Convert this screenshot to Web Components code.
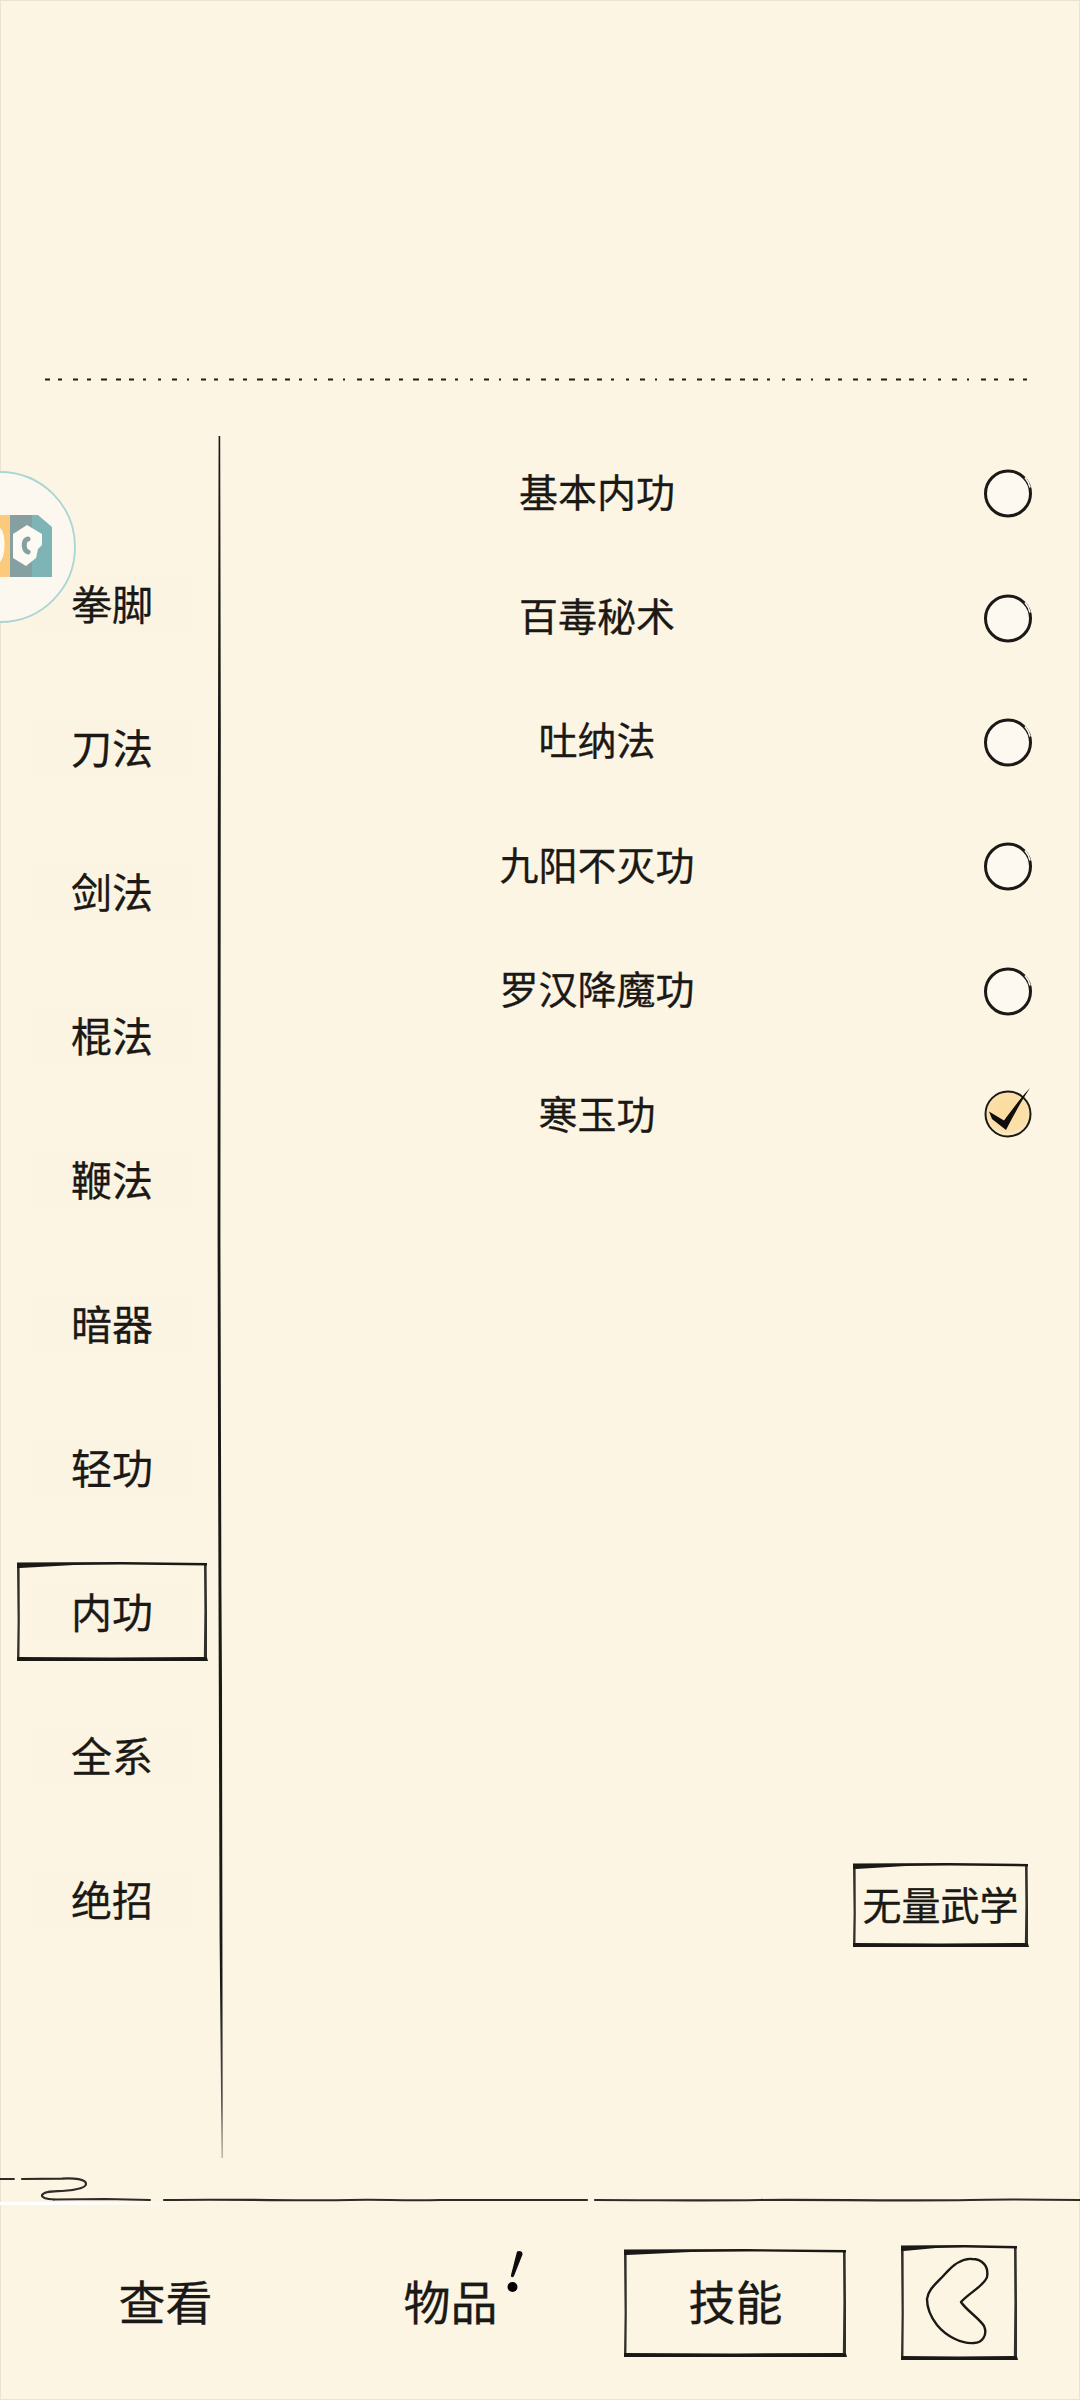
<!DOCTYPE html>
<html lang="zh">
<head>
<meta charset="utf-8">
<title>技能</title>
<style>
html, body { margin: 0; padding: 0; background: #fcf5e4; }
body { font-family: "Noto Sans CJK SC", "Noto Sans", sans-serif; color: #1b1916; -webkit-text-stroke: .3px #1b1916; }
</style>
</head>
<body>
<wuxia-page>
  <wuxia-float slot="float"></wuxia-float>

  <wuxia-side slot="side">
    <side-item>拳脚</side-item>
    <side-item>刀法</side-item>
    <side-item>剑法</side-item>
    <side-item>棍法</side-item>
    <side-item>鞭法</side-item>
    <side-item>暗器</side-item>
    <side-item>轻功</side-item>
    <side-item active>内功</side-item>
    <side-item>全系</side-item>
    <side-item>绝招</side-item>
  </wuxia-side>

  <wuxia-list slot="list">
    <skill-row>基本内功</skill-row>
    <skill-row>百毒秘术</skill-row>
    <skill-row>吐纳法</skill-row>
    <skill-row>九阳不灭功</skill-row>
    <skill-row>罗汉降魔功</skill-row>
    <skill-row checked>寒玉功</skill-row>
    <sketch-box slot="action" w="175" h="84" size="39">无量武学</sketch-box>
  </wuxia-list>

  <wuxia-footer slot="footer">
    <bar-tab>查看</bar-tab>
    <bar-tab notice>物品</bar-tab>
    <bar-tab active>技能</bar-tab>
    <back-button></back-button>
  </wuxia-footer>
</wuxia-page>

<script>
const INK = '#1b1916';

// hand drawn rectangle, thick wedge on the top left like the reference
function framePaths (w, h) {
    return `
      <path fill="${INK}" d="M0 0.5 L${w * 0.55} 0 L${w} 1 L${w} 3.4 L${w * 0.55} 2.4 L${w * 0.3} 3 L3 6 L0 6 Z"/>
      <path fill="${INK}" d="M0 3 L2.6 3 L2.8 ${h * 0.6} L2.4 ${h} L0 ${h} L0.6 ${h * 0.6} Z" opacity=".9"/>
      <path fill="${INK}" d="M${w - 3} 2 L${w - 0.4} 2 L${w} ${h * 0.5} L${w} ${h} L${w - 3.2} ${h} L${w - 2.6} ${h * 0.5} Z" opacity=".9"/>
      <path fill="${INK}" d="M0 ${h - 4} L${w * 0.5} ${h - 3.6} L${w - 4} ${h - 4} L${w} ${h - 3.4} L${w + 1} ${h} L${w * 0.5} ${h} L0 ${h} Z"/>`;
}

function frameSvg (w, h) {
    return `<svg class="frame" width="${w + 2}" height="${h}" viewBox="0 0 ${w + 2} ${h}" aria-hidden="true">${framePaths(w, h)}</svg>`;
}

class WuxiaPage extends HTMLElement {
    constructor () {
        super();
        this.attachShadow({ mode: 'open' });
        this.shadowRoot.innerHTML = `
<style>
:host {
    display: grid;
    grid-template-rows: 381px 1789px 35px 195px;
    position: relative;
    width: 1080px;
    height: 2400px;
    overflow: hidden;
    background: #fcf5e4;
    box-shadow: inset 0 0 0 1px #e9e3d2;
}
.top { display: flex; align-items: flex-end; padding: 0 45px; }
.top svg { display: block; }
.main { display: flex; min-height: 0; }
.rule svg { display: block; }
</style>
<div class="top">
  <svg width="990" height="3" viewBox="0 0 990 3" aria-hidden="true">
    <line x1="0" y1="1.500" x2="990" y2="1.500" stroke="#1f1d19" stroke-width="2.200" stroke-dasharray="5 8 4 11 5 9 4 10 6 9 5 8 5 9 3 12 3 11 5 10 2 12"/>
  </svg>
</div>
<div class="main">
  <slot name="side"></slot>
  <svg width="10" height="1722" viewBox="0 0 10 1722" style="margin:55px 0 0 8px;flex:none" aria-hidden="true">
    <defs><linearGradient id="tail" x1="0" y1="0" x2="0" y2="1"><stop offset="0" stop-color="${INK}"/><stop offset=".9" stop-color="${INK}"/><stop offset=".97" stop-color="#55524a"/><stop offset="1" stop-color="#aaa69a"/></linearGradient></defs>
    <path fill="url(#tail)" d="M3.600 0 L5.200 0 L5.800 300 L5.400 800 L6.400 1150 L7 1250 L7.400 1500 L7.800 1722 L6.600 1722 L4.600 1500 L3.800 1250 L3 1000 L2.600 800 L2.800 400 Z"/>
  </svg>
  <slot name="list"></slot>
</div>
<div class="rule">
  <svg width="1080" height="35" viewBox="0 2170 1080 35" aria-hidden="true">
    <defs><linearGradient id="fade"><stop offset="0" stop-color="#fff"/><stop offset=".3" stop-color="#fff"/><stop offset="1" stop-color="#fff" stop-opacity="0"/></linearGradient></defs>
    <rect x="0" y="2202" width="190" height="3" fill="url(#fade)"/>
    <g fill="none" stroke="#2e2b25" stroke-linecap="round">
      <path stroke-width="1.800" d="M0 2179 H14"/>
      <path stroke-width="2.200" d="M22 2179 L62 2178.600 C74 2178 86 2179 86 2184 C86 2188 76 2190 62 2191 C54 2191.500 44 2191 42 2195 C41.500 2198 47 2199 54 2199.500"/>
      <path stroke-width="2" d="M54 2199.500 L105 2199 L150 2200"/>
      <path stroke-width="2.200" d="M164 2200 C240 2199 300 2201 350 2200 C380 2199 400 2201 440 2200 C500 2200 550 2200 587 2200"/>
      <path stroke-width="2.200" d="M595 2200 C660 2200 700 2201 760 2200 C820 2199.500 900 2201 970 2200 C1000 2199 1040 2199.500 1080 2200"/>
    </g>
  </svg>
</div>
<slot name="footer"></slot>
<slot name="float"></slot>`;
    }
}

class WuxiaFloat extends HTMLElement {
    constructor () {
        super();
        this.attachShadow({ mode: 'open' });
        this.shadowRoot.innerHTML = `
<style>
:host { display: block; position: absolute; left: 0; top: 470px; width: 78px; height: 154px; }
svg { display: block; }
</style>
<svg width="78" height="154" viewBox="0 470 78 154" aria-hidden="true">
  <circle cx="0" cy="547" r="75" fill="#fcf8f0" stroke="#a9d5d2" stroke-width="1.800"/>
  <rect x="0" y="515" width="10" height="62" fill="#fbca7c"/>
  <path fill="#86a0a1" d="M10 515 H32 V577 H10 Z"/>
  <path fill="#7fb4b7" d="M32 515 H38 L52 527 V577 H32 Z"/>
  <path fill="#fdfaf3" d="M27 525 L42 534 V545 L38 549 L36 558 L26 566 L13 558 V534 Z"/>
  <path fill="none" stroke="#86a0a1" stroke-width="5" stroke-linecap="round" d="M28 539 C23 540 23 550 28 552"/>
  <path fill="#fdfaf3" d="M0 528 C6 532 6 556 0 562 Z"/>
</svg>`;
    }
}

class WuxiaSide extends HTMLElement {
    constructor () {
        super();
        this.attachShadow({ mode: 'open' });
        this.shadowRoot.innerHTML = `
<style>
:host {
    display: flex;
    flex-direction: column;
    gap: 48px;
    flex: none;
    width: 190px;
    margin-left: 17px;
    padding-top: 175px;
}
</style>
<slot></slot>`;
    }
}

class SideItem extends HTMLElement {
    constructor () {
        super();
        this.attachShadow({ mode: 'open' });
        const active = this.hasAttribute('active');
        this.shadowRoot.innerHTML = `
<style>
:host {
    display: flex;
    align-items: center;
    justify-content: center;
    position: relative;
    height: 96px;
    font-size: 41px;
}
.patch { display: block; width: 160px; height: 60px; line-height: 56px; text-align: center; background: #fbf4e3; }
.frame { position: absolute; left: 0; top: -2px; }
</style>
<span class="patch"><slot></slot></span>
${active ? frameSvg(190, 99) : ''}`;
    }
}

class WuxiaList extends HTMLElement {
    constructor () {
        super();
        this.attachShadow({ mode: 'open' });
        this.shadowRoot.innerHTML = `
<style>
:host {
    display: flex;
    flex-direction: column;
    flex: 1;
    min-width: 0;
    padding-top: 49px;
}
.action { align-self: flex-end; margin: 687px 52px 0 0; display: block; }
</style>
<slot></slot>
<div class="action"><slot name="action"></slot></div>`;
    }
}

class SkillRow extends HTMLElement {
    constructor () {
        super();
        this.attachShadow({ mode: 'open' });
        const checked = this.hasAttribute('checked');
        const mark = checked ? `
    <defs><radialGradient id="glow" cx=".5" cy=".4" r=".6"><stop offset="0" stop-color="#fbdca0"/><stop offset=".8" stop-color="#fbe0ab"/><stop offset="1" stop-color="#fcf1d8"/></radialGradient></defs>
    <circle cx="35" cy="35" r="22.500" fill="url(#glow)" stroke="${INK}" stroke-width="2"/>
    <path fill="#100e0c" d="M16 32.500 L31 41.500 C39 31 49 17 57 9 C49 21 39 39 33 51 L19 40 Z"/>` : `
    <circle cx="35" cy="36.500" r="22.500" fill="#fdf9f0" stroke="${INK}" stroke-width="3"/>
    <path fill="none" stroke="#fdf9f0" stroke-width="1.600" d="M52 20.500 A22.500 22.500 0 0 1 57 30.500"/>`;
        this.shadowRoot.innerHTML = `
<style>
:host {
    display: grid;
    grid-template-columns: 1fr 70px;
    align-items: center;
    height: 124.4px;
    padding-right: 37px;
    font-size: 39px;
    text-align: center;
}
span { padding: 0 4px 5px 0; }
svg { display: block; }
</style>
<span><slot></slot></span>
<svg width="70" height="70" viewBox="0 0 70 70" aria-hidden="true">${mark}</svg>`;
    }
}

class SketchBox extends HTMLElement {
    constructor () {
        super();
        this.attachShadow({ mode: 'open' });
        const w = Number(this.getAttribute('w'));
        const h = Number(this.getAttribute('h'));
        this.shadowRoot.innerHTML = `
<style>
:host {
    display: flex;
    align-items: center;
    justify-content: center;
    position: relative;
    width: ${w}px;
    height: ${h}px;
    font-size: ${this.getAttribute('size')}px;
}
span { padding-bottom: 5px; }
.frame { position: absolute; left: 0; top: 0; }
</style>
<span><slot></slot></span>
${frameSvg(w, h)}`;
    }
}

class WuxiaFooter extends HTMLElement {
    constructor () {
        super();
        this.attachShadow({ mode: 'open' });
        this.shadowRoot.innerHTML = `
<style>
:host {
    display: flex;
    align-items: center;
    gap: 64px;
    padding: 0 0 0 55px;
}
</style>
<slot></slot>`;
    }
}

class BarTab extends HTMLElement {
    constructor () {
        super();
        this.attachShadow({ mode: 'open' });
        const extra = this.hasAttribute('active')
            ? frameSvg(222, 108)
            : this.hasAttribute('notice')
                ? `<svg class="notice" width="24" height="48" viewBox="0 0 24 48" aria-hidden="true">
                     <path fill="#0e0d0b" d="M14 1.500 C17 0 20 1.500 19.500 4.500 L11 26 C10 28 7.500 27.500 8 25 Z"/>
                     <circle cx="9.500" cy="37" r="5"/>
                   </svg>`
                : '';
        this.shadowRoot.innerHTML = `
<style>
:host {
    display: flex;
    align-items: center;
    justify-content: center;
    position: relative;
    flex: none;
    width: 221px;
    height: 108px;
    font-size: 47px;
}
span { padding-bottom: 6px; }
.frame { position: absolute; left: -1px; top: 0; }
.notice { position: absolute; left: 163px; top: 1px; }
</style>
<span><slot></slot></span>
${extra}`;
    }
}

class BackButton extends HTMLElement {
    constructor () {
        super();
        this.attachShadow({ mode: 'open' });
        this.shadowRoot.innerHTML = `
<style>
:host { display: block; position: relative; flex: none; width: 116px; height: 115px; margin-left: -9px; }
svg { display: block; }
</style>
<svg width="118" height="115" viewBox="0 0 118 115" aria-label="返回">
  ${framePaths(116, 115)}
  <path fill="none" stroke="${INK}" stroke-width="2.400" stroke-linejoin="round"
    d="M71 14 C81 14 88 21 86 32 C84 40 68 48 60 57 C65 65 78 73 83 81 C87 90 81 98 73 98 C60 99 45 91 36 80 C29 71 26 63 26 54 C27 44 37 37 44 29 C51 21 61 13 71 14 Z"/>
</svg>`;
    }
}

customElements.define('wuxia-page', WuxiaPage);
customElements.define('wuxia-float', WuxiaFloat);
customElements.define('wuxia-side', WuxiaSide);
customElements.define('side-item', SideItem);
customElements.define('wuxia-list', WuxiaList);
customElements.define('skill-row', SkillRow);
customElements.define('sketch-box', SketchBox);
customElements.define('wuxia-footer', WuxiaFooter);
customElements.define('bar-tab', BarTab);
customElements.define('back-button', BackButton);
</script>
</body>
</html>
